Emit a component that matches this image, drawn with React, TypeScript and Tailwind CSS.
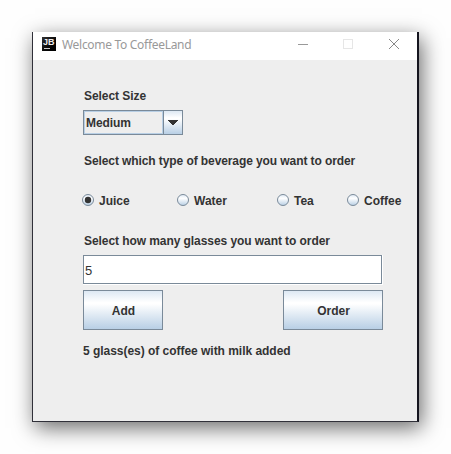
import React, { useState } from "react";

const BEVERAGES = [
  { name: "Juice", width: "w-[95px]" },
  { name: "Water", width: "w-[100px]" },
  { name: "Tea", width: "w-[70px]" },
  { name: "Coffee", width: "w-[62px]" },
];

const GLOSS =
  "bg-[linear-gradient(180deg,#dde8f3_0%,#ffffff_30%,#ffffff_34%,#b8cfe5_100%)]";

function AppIcon() {
  return (
    <div className="relative h-[14px] w-[14px] overflow-hidden bg-gradient-to-br from-[#333] to-black">
      <span className="absolute left-[1px] top-0 font-['Liberation_Sans',sans-serif] text-[9px] font-bold leading-[10px] text-[#eee]">
        JB
      </span>
      <span className="absolute left-[2px] top-[11px] h-px w-[6px] bg-[#ccc]" />
    </div>
  );
}

function TitleBar() {
  return (
    <header className="flex h-7 items-start bg-white pl-[9px] pt-[5px]">
      <AppIcon />
      <h1 className="ml-[6px] mt-[-1px] w-[160px] whitespace-nowrap font-['Noto_Sans',sans-serif] text-[12px] leading-[18px] tracking-[-0.3px] text-[#999]">
        Welcome To CoffeeLand
      </h1>
      <svg className="ml-[76px] mt-[2px]" width="102" height="10" viewBox="0 0 102 10" fill="none" shapeRendering="crispEdges">
        <path d="M0 5.5H10" stroke="#999" />
        <rect x="45.5" y=".5" width="9" height="9" stroke="#e6e6e6" />
        <path d="M91 0L101 10M101 0L91 10" stroke="#888" shapeRendering="auto" />
      </svg>
    </header>
  );
}

function Radio({ name, checked, onSelect }: { name: string; checked: boolean; onSelect: () => void }) {
  return (
    <button role="radio" aria-checked={checked} onClick={onSelect} className="flex items-start gap-[5px]">
      <svg width="12" height="12" viewBox="0 0 12 12">
        <defs>
          <linearGradient id={"gloss" + name} x1="0" y1="0" x2="0" y2="1">
            <stop offset="0" stopColor="#dde8f3" />
            <stop offset=".35" stopColor="#fff" />
            <stop offset="1" stopColor="#b8cfe5" />
          </linearGradient>
        </defs>
        <circle cx="6" cy="6" r="5.5" fill={`url(#gloss${name})`} stroke="#7a8a99" />
        {checked && <circle cx="6" cy="6" r="3.2" fill="#333" />}
      </svg>
      <span className="leading-[14px]">{name}</span>
    </button>
  );
}

export default function App() {
  const [beverage, setBeverage] = useState("Juice");
  return (
    <main className="h-[454px] w-[451px] overflow-hidden bg-[#fefefe] pl-8 pt-8">
      <div className="h-[390px] w-[387px] border-b border-l border-r-2 border-b-[#303039] border-l-[#303039] border-r-[#15151f] bg-[#eee] shadow-[3px_6px_20px_rgba(0,0,0,0.58)]">
        <TitleBar />
        <section className="flex flex-col pl-[50px] pt-[29px] font-['Liberation_Sans',Arial,sans-serif] text-[12px] font-bold text-[#333]">
          <label className="ml-px h-[21px] leading-[14px] tracking-[-0.06px]">Select Size</label>
          <div className="flex h-[25px] w-[100px] border border-[#7a8a99]">
            <div className="w-[79px] border border-[#b8cfe5] pl-[1px] pt-[4px] leading-[14px] tracking-[-0.08px]">Medium</div>
            <div className={`flex flex-1 items-center justify-center border-l border-[#7a8a99] ${GLOSS}`}>
              <svg width="10" height="5" viewBox="0 0 10 5" shapeRendering="crispEdges">
                <path d="M0 0H10V1H9V2H8V3H7V4H6V5H4V4H3V3H2V2H1V1H0Z" fill="#333" />
              </svg>
            </div>
          </div>
          <p className="ml-px mt-[19px] h-[14px] whitespace-nowrap leading-[14px] tracking-[-0.09px]">
            Select which type of beverage you want to order
          </p>
          <div className="-ml-px mt-[26px] flex h-[14px]" role="radiogroup">
            {BEVERAGES.map((b) => (
              <div key={b.name} className={`${b.width} shrink-0`}>
                <Radio name={b.name} checked={beverage === b.name} onSelect={() => setBeverage(b.name)} />
              </div>
            ))}
          </div>
          <p className="ml-px mt-[26px] h-[21px] whitespace-nowrap leading-[14px] tracking-[-0.07px]">
            Select how many glasses you want to order
          </p>
          <div className="h-[30px] w-[300px] border-b border-r border-white">
            <input
              defaultValue="5"
              className="block h-[29px] w-[299px] border border-[#7a8a99] bg-white pl-[1px] pt-px text-[13px] font-normal outline-none"
            />
          </div>
          <div className="mt-[5px] flex h-10 w-[300px] justify-between">
            <button className={`w-20 border border-[#7a8a99] pl-px pt-[2px] ${GLOSS}`}>Add</button>
            <button className={`w-[100px] border border-[#7a8a99] pl-px pt-[2px] ${GLOSS}`}>Order</button>
          </div>
          <p className="mt-[14px] whitespace-nowrap leading-[14px] tracking-[-0.03px]">
            5 glass(es) of coffee with milk added
          </p>
        </section>
      </div>
    </main>
  );
}
